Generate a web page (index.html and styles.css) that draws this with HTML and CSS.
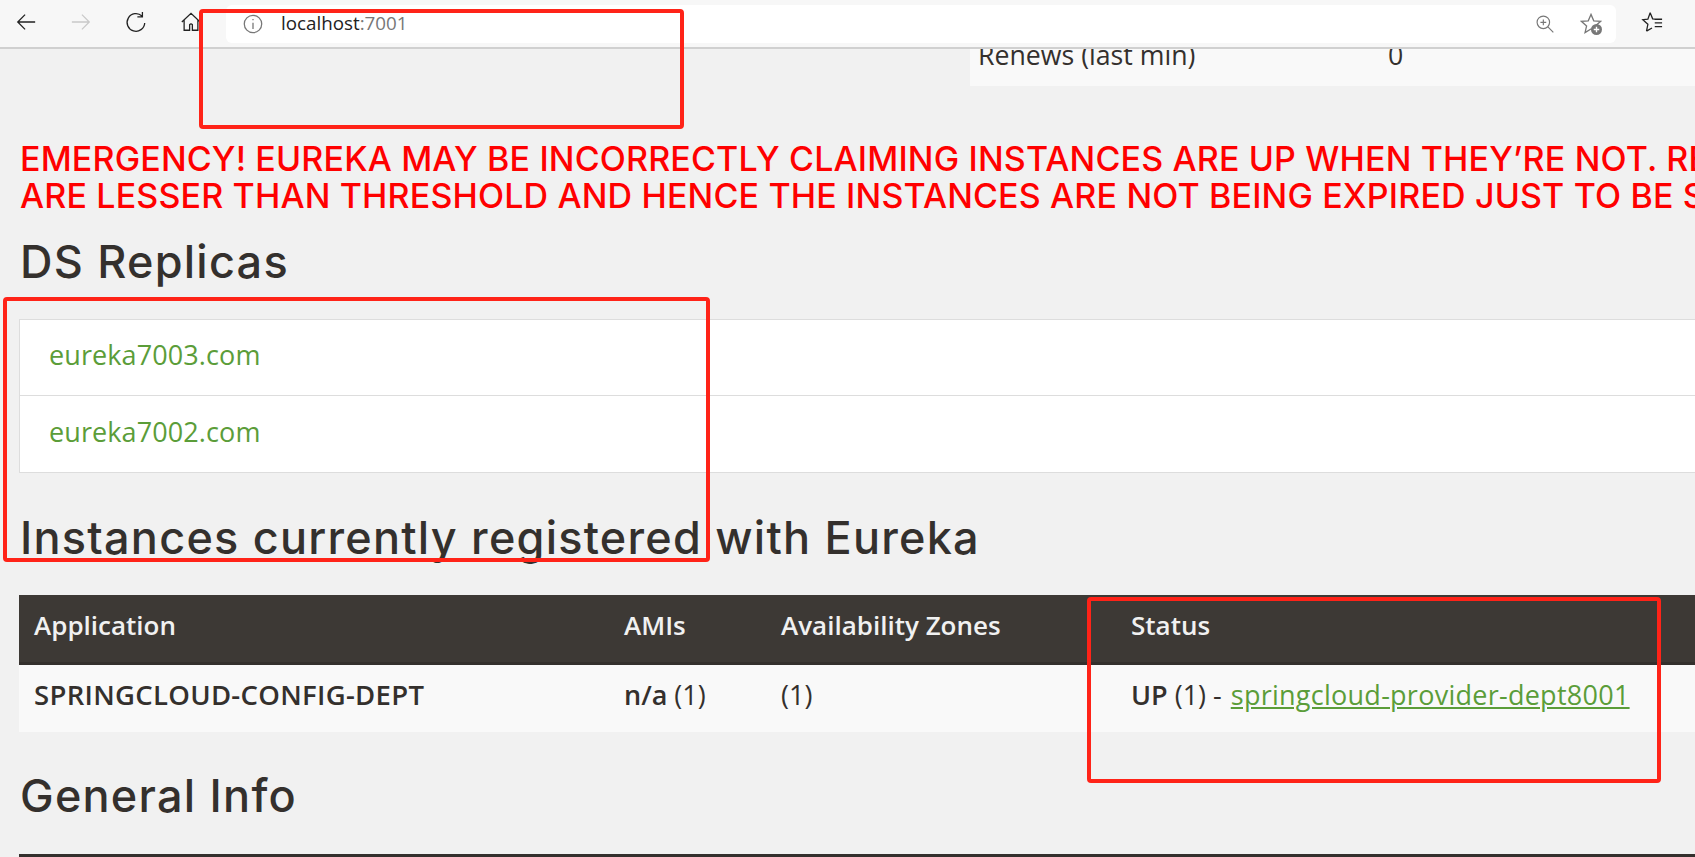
FILE: index.html
```html
<!DOCTYPE html>
<html lang="en">
<head>
<meta charset="utf-8">
<title>Eureka</title>
<link rel="stylesheet" href="styles.css">
</head>
<body>
<header class="toolbar">
  <nav class="nav">
    <svg class="icon" viewBox="0 0 24 24"><path d="M22 12H3M11 4l-8 8 8 8"/></svg>
    <svg class="icon off" viewBox="0 0 24 24"><path d="M2 12h19M13 4l8 8-8 8"/></svg>
    <svg class="icon" viewBox="0 0 24 24"><path d="M18.5 5.5A9.6 9.6 0 1 0 21.5 13M19 1v5.5h-5.5"/></svg>
    <svg class="icon home" viewBox="0 0 24 24"><path d="M2 12L12 2.500 22 12M4.500 10v11h6v-6q1.500-2 3 0v6h6V10"/></svg>
  </nav>
  <div class="address">
    <svg class="icon info" viewBox="0 0 24 24"><circle cx="12" cy="12" r="9.5"/><path d="M12 10.500v7M12 6.500v1.500"/></svg>
    <span class="url">localhost<span class="port">:7001</span></span>
    <svg class="icon grey zoomi" viewBox="0 0 24 24"><circle cx="10" cy="10" r="7.500"/><path d="M15.500 15.500L22 22M6.500 10h7M10 6.500v7"/></svg>
    <svg class="icon grey star" viewBox="0 0 24 24"><path d="M12 1.500l3 7 7.500.6-5.700 5 1.700 7.300-6.500-3.900-6.500 3.900 1.700-7.300-5.700-5 7.500-.6z"/><circle class="badge" cx="18" cy="18" r="6"/><path class="plus" d="M18 15v6M15 18h6"/></svg>
  </div>
  <svg class="icon fav" viewBox="0 0 24 24"><path d="M10 2l2.700 6.500 5.300.5M6 22l1.500-7.500L2 9.500l5.500-.5L10 2M6 22l6-3.500M15 13h8M15 17h8M15 9h8"/></svg>
</header>

<main class="page">
  <div class="stat-row">
    <span class="stat-name">Renews (last min)</span>
    <span class="stat-value">0</span>
  </div>

  <h4 class="alert">EMERGENCY! EUREKA MAY BE INCORRECTLY CLAIMING INSTANCES ARE UP WHEN THEY’RE NOT. RENEWALS<br>ARE LESSER THAN THRESHOLD AND HENCE THE INSTANCES ARE NOT BEING EXPIRED JUST TO BE SAFE.</h4>

  <h1 class="title first">DS Replicas</h1>
  <ul class="replicas">
    <li><a href="#">eureka7003.com</a></li>
    <li><a href="#">eureka7002.com</a></li>
  </ul>

  <h1 class="title second">Instances currently registered with Eureka</h1>
  <table class="instances">
    <thead>
      <tr><th class="c1">Application</th><th class="c2">AMIs</th><th class="c3">Availability Zones</th><th>Status</th></tr>
    </thead>
    <tbody>
      <tr>
        <td class="strong name">SPRINGCLOUD-CONFIG-DEPT</td>
        <td><b class="strong">n/a</b> (1)</td>
        <td>(1)</td>
        <td><b class="strong">UP</b> (1) - <a class="inst" href="#">springcloud-provider-dept8001</a></td>
      </tr>
    </tbody>
  </table>

  <h1 class="title third">General Info</h1>
  <div class="next-head"></div>
</main>

<div class="mark mark-a"></div>
<div class="mark mark-b"></div>
<div class="mark mark-c"></div>
</body>
</html>
```
FILE: styles.css
```css
html, body { margin: 0; padding: 0; }
body {
  width: 1695px;
  height: 857px;
  overflow: hidden;
  background: #f1f1f1;
  color: #34302d;
  font-family: "Open Sans", "Noto Sans", sans-serif;
  position: relative;
}
.toolbar {
  height: 47px;
  border-bottom: 2px solid #d0d0d0;
  background: #f7f7f7;
  display: flex;
  align-items: flex-start;
  position: relative;
  z-index: 1;
}
.nav {
  display: flex;
  gap: 33px;
  padding: 11px 0 0 15px;
  width: 226px;
  box-sizing: border-box;
}
.icon {
  width: 22px;
  height: 22px;
  flex: none;
  fill: none;
  stroke: #222;
  stroke-width: 1.400;
}
.icon.off { stroke: #c9c9c9; }
.icon.grey, .icon.info { stroke: #777; }
.address {
  width: 1390px;
  height: 38px;
  margin-top: 5px;
  background: #fff;
  border-radius: 6px;
  display: flex;
  align-items: center;
  padding-left: 16px;
  box-sizing: border-box;
}
.url { font-size: 18.800px; margin-left: 17px; color: #222; flex: 1; position: relative; top: -1px; }
.port { color: #777; }
.zoomi { margin-right: 25px; width: 20px; height: 20px; }
.star { margin-right: 14px; }
.badge { fill: #777; stroke: none; }
.plus { stroke: #fff; stroke-width: 1.500; }
.fav { margin: 11px 0 0 25px; }

.page { padding-left: 19px; }
.stat-row {
  margin-left: 951px;
  height: 37px;
  background: #f9f9f9;
  display: flex;
  font-size: 26.700px;
  line-height: 32px;
}
.stat-name { width: 409px; padding-left: 8px; box-sizing: border-box; }
.stat-name, .stat-value { margin-top: -10px; }
.stat-value { margin-left: 9px; }

.alert {
  margin: 54px 0 -1px 1px;
  color: #f00;
  font-family: "Inter", sans-serif;
  font-weight: 500;
  font-size: 34px;
  letter-spacing: .15px;
  line-height: 37px;
  white-space: nowrap;
}
.title {
  margin: 0 0 0 1px;
  font-family: "Inter", sans-serif;
  font-weight: 500;
  font-size: 45px;
  letter-spacing: 1.240px;
  line-height: 54px;
  white-space: nowrap;
}
.title.first { margin-top: 22px; }
.title.second { margin-top: 38px; }
.title.third { margin-top: 37px; }
.replicas {
  list-style: none;
  margin: 30px 0 0;
  padding: 0;
  background: #fff;
  border: 1px solid #ddd;
  border-right: 0;
  font-size: 27px;
}
.replicas li { height: 75px; line-height: 70px; padding-left: 29px; letter-spacing: .1px; }
.replicas li + li { height: 76px; border-top: 1px solid #ddd; line-height: 72px; }
.replicas a { color: #5b9d39; text-decoration: none; }
.instances {
  margin-top: 30px;
  width: 1676px;
  border-collapse: collapse;
  font-size: 27px;
  table-layout: fixed;
}
.instances th {
  background: #3d3935;
  border-bottom: 3px solid #34302d;
  color: #f1f1f1;
  font-weight: 600;
  font-size: 26px;
  text-align: left;
  height: 60px;
  padding: 0 0 7px 15px;
}
.instances td { background: #f9f9f9; height: 59px; padding: 0 0 8px 15px; }
.c1 { width: 575px; }
.c2 { width: 142px; }
.c3 { width: 335px; }
.strong { font-weight: 600; }
.name { font-size: 27.500px; letter-spacing: .3px; }
.inst { color: #5b9d39; letter-spacing: .26px; margin-left: 2px; }
.next-head { height: 3px; background: #34302d; margin-top: 31px; }

.mark {
  position: absolute;
  z-index: 2;
  border: 4px solid #ff2318;
  border-radius: 4px;
  box-sizing: border-box;
}
.mark-a { left: 199px; top: 9px; width: 485px; height: 120px; }
.mark-b { left: 3px; top: 297px; width: 707px; height: 265px; }
.mark-c { left: 1087px; top: 597px; width: 574px; height: 186px; }
```
